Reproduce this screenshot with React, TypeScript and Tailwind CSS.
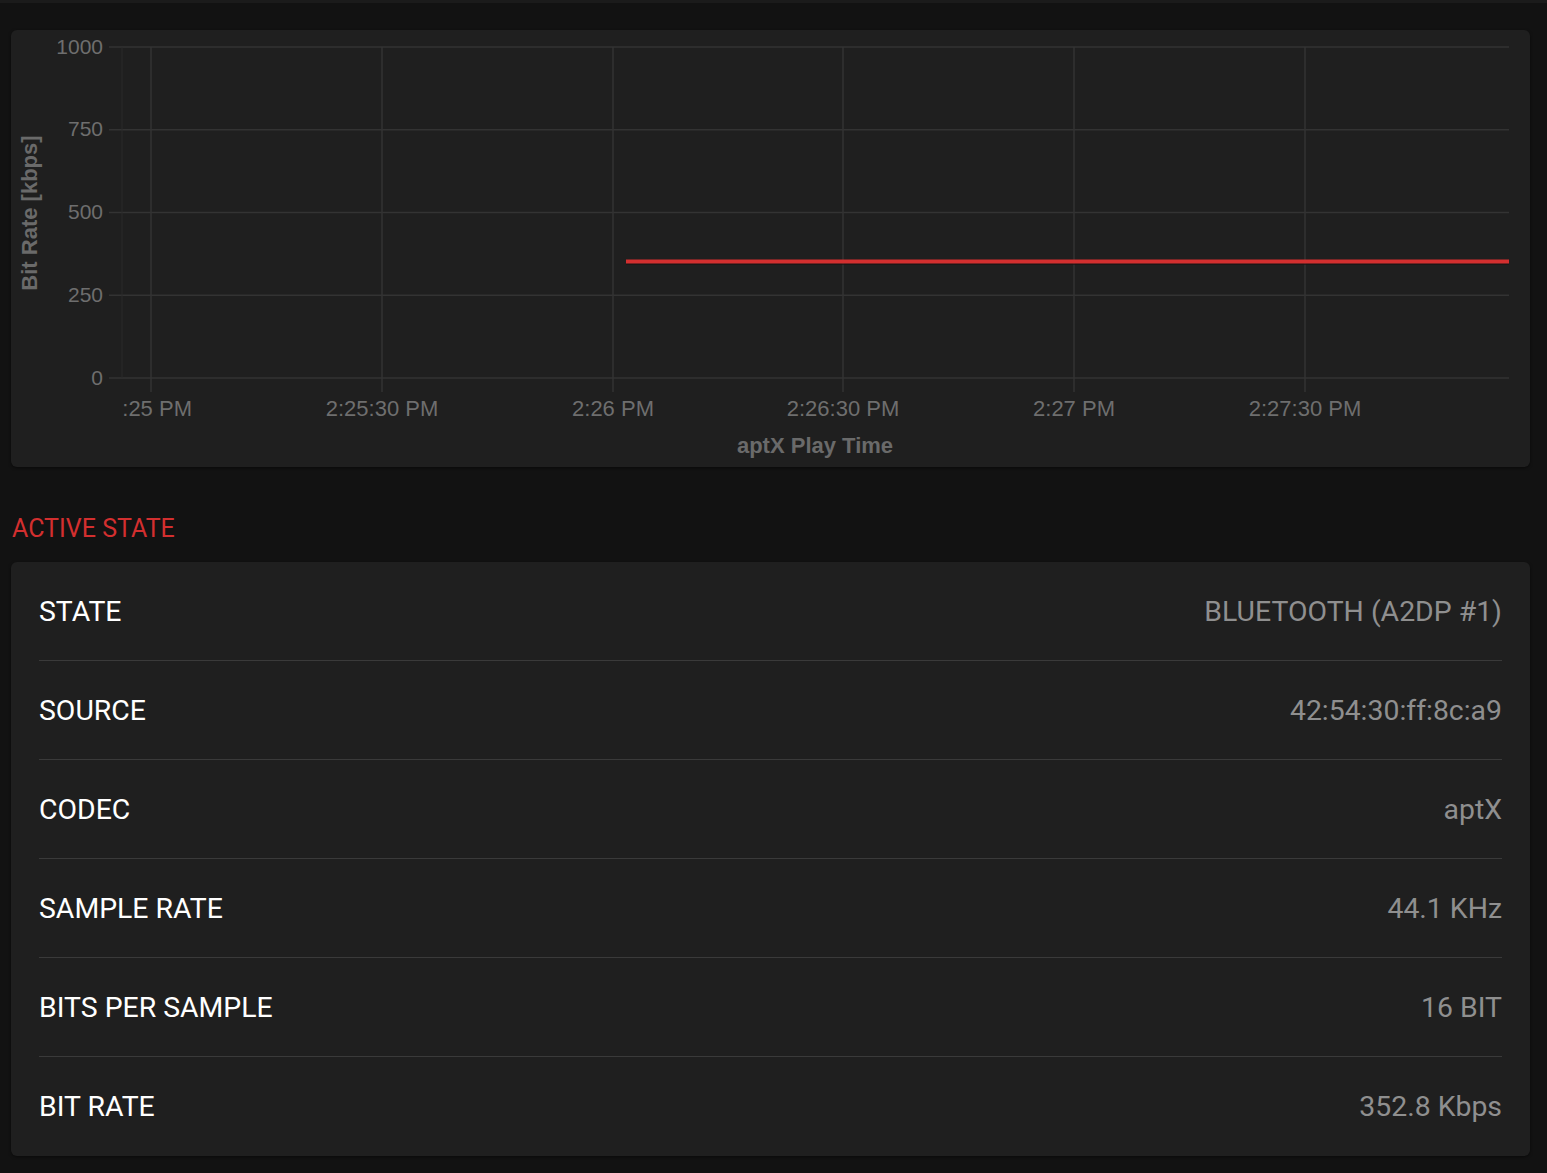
const rows = [
  { label: "STATE", value: "BLUETOOTH (A2DP #1)" },
  { label: "SOURCE", value: "42:54:30:ff:8c:a9" },
  { label: "CODEC", value: "aptX" },
  { label: "SAMPLE RATE", value: "44.1 KHz" },
  { label: "BITS PER SAMPLE", value: "16 BIT" },
  { label: "BIT RATE", value: "352.8 Kbps" },
];

// plot area in card coordinates
const left = 111;
const right = 1498;
const top = 17;
const bottom = 348;
const yTicks = [0, 250, 500, 750, 1000];
const xTicks = [
  { x: 140, label: "2:25 PM" },
  { x: 371, label: "2:25:30 PM" },
  { x: 602, label: "2:26 PM" },
  { x: 832, label: "2:26:30 PM" },
  { x: 1063, label: "2:27 PM" },
  { x: 1294, label: "2:27:30 PM" },
];

const chartFont = "'Liberation Sans', Arial, sans-serif";

function yPos(v: number) {
  return bottom - ((bottom - top) * v) / 1000;
}

function BitRateChart() {
  return (
    <svg width="1519" height="437" viewBox="0 0 1519 437" className="block">
      <defs>
        <clipPath id="plot-labels">
          <rect x={left} y="360" width={right - left + 40} height="40" />
        </clipPath>
      </defs>
      {yTicks.map((v) => (
        <g key={v}>
          <line x1={98} x2={right} y1={yPos(v)} y2={yPos(v)} stroke="#333333" strokeWidth="1.5" />
          <text x="92" y={yPos(v) + 6.5} textAnchor="end" fill="#6e6e6e" fontSize="21" fontFamily={chartFont}>
            {v}
          </text>
        </g>
      ))}
      <line x1={left} x2={left} y1={top} y2={bottom} stroke="#2a2a2a" strokeWidth="1" />
      {xTicks.map((t) => (
        <line key={t.x} x1={t.x} x2={t.x} y1={top} y2={362} stroke="#333333" strokeWidth="1.5" />
      ))}
      <g clipPath="url(#plot-labels)">
        {xTicks.map((t) => (
          <text key={t.label} x={t.x} y="386" textAnchor="middle" fill="#6e6e6e" fontSize="22" fontFamily={chartFont}>
            {t.label}
          </text>
        ))}
      </g>
      <line x1="615" x2={right} y1="233.5" y2="233.5" stroke="#1a1212" strokeWidth="3" opacity="0.6" />
      <line x1="615" x2={right} y1="231.5" y2="231.5" stroke="#d32f2f" strokeWidth="4" />
      <text
        x="804"
        y="423"
        textAnchor="middle"
        fill="#6a6a6a"
        fontSize="22"
        fontWeight="bold"
        fontFamily={chartFont}
      >
        aptX Play Time
      </text>
      <text
        x="0"
        y="0"
        transform="translate(26 183) rotate(-90)"
        textAnchor="middle"
        fill="#6a6a6a"
        fontSize="22"
        fontWeight="bold"
        fontFamily={chartFont}
      >
        Bit Rate [kbps]
      </text>
    </svg>
  );
}

export default function App() {
  return (
    <div className="min-h-screen bg-[#121212] font-['Roboto',sans-serif]">
      <div className="h-[3px] bg-[#1b1b1b]" />
      <div className="pl-[11px] pr-[17px] pt-[27px] pb-[19px]">
        <div className="rounded-md bg-[#1f1f1f] shadow-[0_1px_3px_rgba(0,0,0,0.5)] h-[437px] overflow-hidden">
          <BitRateChart />
        </div>

        <h2 className="mt-[47px] mb-[18px] text-[25px] leading-[30px] text-[#d32f2f] pl-px">ACTIVE STATE</h2>

        <div className="rounded-md bg-[#1f1f1f] shadow-[0_1px_3px_rgba(0,0,0,0.5)] px-[28px]">
          {rows.map((row, i) => (
            <div
              key={row.label}
              className={`flex h-[99px] items-center justify-between pt-[2px] ${
                i < rows.length - 1 ? "border-b border-[#3a3a3a]" : ""
              }`}
            >
              <span className="text-[28.4px] text-white">{row.label}</span>
              <span className="text-[28.4px] text-[#8f8f8f]">{row.value}</span>
            </div>
          ))}
        </div>
      </div>
    </div>
  );
}
